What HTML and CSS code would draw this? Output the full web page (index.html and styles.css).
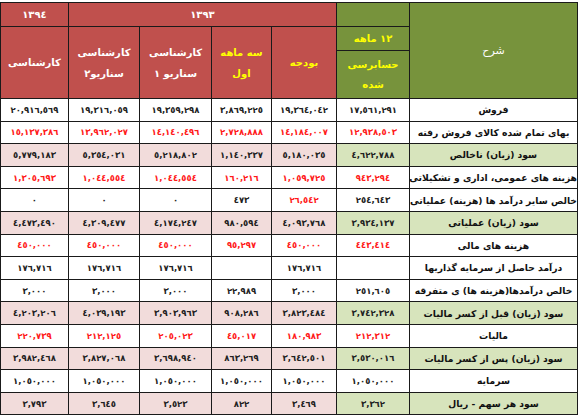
FILE: index.html
```html
<!DOCTYPE html>
<html lang="fa" dir="rtl">
<head>
<meta charset="utf-8">
<link rel="stylesheet" href="styles.css">
</head>
<body>
<table class="fin">
  <colgroup>
    <col class="c-label">
    <col class="c-12">
    <col class="c-bud">
    <col class="c-3m">
    <col class="c-s1">
    <col class="c-s2">
    <col class="c-94">
  </colgroup>
  <thead>
    <tr class="h1">
      <th class="hg label-h" rowspan="3">شرح</th>
      <th class="hg"></th>
      <th class="hr" colspan="4">١٣٩٣</th>
      <th class="hr">١٣٩٤</th>
    </tr>
    <tr class="h2">
      <th class="hg yel">١٢ ماهه</th>
      <th class="hr yel" rowspan="2">بودجه</th>
      <th class="hr yel" rowspan="2">سه ماهه<br>اول</th>
      <th class="hr" rowspan="2">کارشناسی<br>سناریو ١</th>
      <th class="hr" rowspan="2">کارشناسی<br>سناریو٢</th>
      <th class="hr" rowspan="2">کارشناسی</th>
    </tr>
    <tr class="h3">
      <th class="hg yel">حسابرسی<br>شده</th>
    </tr>
  </thead>
  <tbody>
    <tr>
      <td class="lbl">فروش</td>
      <td>١٧,٥٦١,٢٩١</td><td>١٩,٣٦٤,٠٤٢</td><td>٣,٨٦٩,٢٢٥</td><td>١٩,٣٥٩,٢٩٨</td><td>١٩,٣١٦,٠٥٩</td><td>٢٠,٩١٦,٥٦٩</td>
    </tr>
    <tr class="neg">
      <td class="lbl">بهای تمام شده کالای فروش رفته</td>
      <td>١٢,٩٣٨,٥٠٣</td><td>١٤,١٨٤,٠٠٧</td><td>٢,٧٢٨,٨٨٨</td><td>١٤,١٤٠,٤٩٦</td><td>١٣,٩٦٢,٠٢٧</td><td>١٥,١٣٧,٣٨٦</td>
    </tr>
    <tr class="sum">
      <td class="lbl">سود (زیان) ناخالص</td>
      <td>٤,٦٢٢,٧٨٨</td><td>٥,١٨٠,٠٣٥</td><td>١,١٤٠,٣٣٧</td><td>٥,٢١٨,٨٠٢</td><td>٥,٣٥٤,٠٣١</td><td>٥,٧٧٩,١٨٣</td>
    </tr>
    <tr class="neg">
      <td class="lbl">هزینه های عمومی، اداری و تشکیلاتی</td>
      <td>٩٤٣,٢٩٤</td><td>١,٠٥٩,٧٢٥</td><td>١٦٠,٢١٦</td><td>١,٠٤٤,٥٥٤</td><td>١,٠٤٤,٥٥٤</td><td>١,٣٠٥,٦٩٣</td>
    </tr>
    <tr>
      <td class="lbl">خالص سایر درآمد ها (هزینه) عملیاتی</td>
      <td>٢٥٤,٦٤٣</td><td class="red">٢٦,٥٤٢</td><td>٤٧٣</td><td>٠</td><td>٠</td><td>٠</td>
    </tr>
    <tr class="sum">
      <td class="lbl">سود (زیان) عملیاتی</td>
      <td>٣,٩٣٤,١٣٧</td><td>٤,٠٩٣,٧٦٨</td><td>٩٨٠,٥٩٤</td><td>٤,١٧٤,٢٤٧</td><td>٤,٣٠٩,٤٧٧</td><td>٤,٤٧٣,٤٩٠</td>
    </tr>
    <tr class="neg">
      <td class="lbl">هزینه های مالی</td>
      <td>٤٤٣,٤١٤</td><td>٤٥٠,٠٠٠</td><td>٩٥,٢٩٧</td><td>٤٥٠,٠٠٠</td><td>٤٥٠,٠٠٠</td><td>٤٥٠,٠٠٠</td>
    </tr>
    <tr>
      <td class="lbl">درآمد حاصل از سرمایه گذاریها</td>
      <td></td><td>١٧٦,٧١٦</td><td></td><td>١٧٦,٧١٦</td><td>١٧٦,٧١٦</td><td>١٧٦,٧١٦</td>
    </tr>
    <tr>
      <td class="lbl">خالص درآمدها(هزینه ها) ی متفرقه</td>
      <td>٢٥١,٦٠٥</td><td>٣,٠٠٠</td><td>٢٢,٩٨٩</td><td>٣,٠٠٠</td><td>٣,٠٠٠</td><td>٣,٠٠٠</td>
    </tr>
    <tr class="sum">
      <td class="lbl">سود (زیان) قبل از کسر مالیات</td>
      <td>٣,٧٤٢,٣٢٨</td><td>٣,٨٢٣,٤٨٤</td><td>٩٠٨,٢٨٦</td><td>٣,٩٠٣,٩٦٣</td><td>٤,٠٣٩,١٩٣</td><td>٤,٢٠٣,٢٠٦</td>
    </tr>
    <tr class="neg">
      <td class="lbl">مالیات</td>
      <td>٢١٢,٣١٢</td><td>١٨٠,٩٨٣</td><td>٤٥,٠١٧</td><td>٢٠٥,٠٢٣</td><td>٢١٢,١٢٥</td><td>٢٢٠,٧٣٩</td>
    </tr>
    <tr class="sum">
      <td class="lbl">سود (زیان) پس از کسر مالیات</td>
      <td>٣,٥٣٠,٠١٦</td><td>٣,٦٤٢,٥٠١</td><td>٨٦٣,٢٦٩</td><td>٣,٦٩٨,٩٤٠</td><td>٣,٨٢٧,٠٦٨</td><td>٣,٩٨٢,٤٦٨</td>
    </tr>
    <tr>
      <td class="lbl">سرمایه</td>
      <td>١,٠٥٠,٠٠٠</td><td>١,٠٥٠,٠٠٠</td><td>١,٠٥٠,٠٠٠</td><td>١,٠٥٠,٠٠٠</td><td>١,٠٥٠,٠٠٠</td><td>١,٠٥٠,٠٠٠</td>
    </tr>
    <tr class="sum">
      <td class="lbl">سود هر سهم - ریال</td>
      <td>٣,٣٦٢</td><td>٣,٤٦٩</td><td>٨٢٢</td><td>٣,٥٢٣</td><td>٣,٦٤٥</td><td>٣,٧٩٣</td>
    </tr>
  </tbody>
</table>
</body>
</html>
```

FILE: styles.css
```css
html, body {
  margin: 0;
  padding: 0;
  background: #ffffff;
}

body {
  padding: 2px 2px 0 1px;
  font-family: "DejaVu Sans", "Noto Sans", sans-serif;
}

.fin {
  border-collapse: collapse;
  table-layout: fixed;
  width: 577px;
  direction: rtl;
}

.c-label { width: 168px; }
.c-12 { width: 73px; }
.c-bud { width: 65px; }
.c-3m { width: 60px; }
.c-s1 { width: 72px; }
.c-s2 { width: 71px; }
.c-94 { width: 68px; }

.fin th,
.fin td {
  border: 1px solid #1a1a1a;
  padding: 0;
  text-align: center;
  vertical-align: middle;
  overflow: hidden;
  white-space: nowrap;
}

.fin th {
  color: #ffffff;
  font-size: 10px;
  font-weight: bold;
  line-height: 21px;
}

.hr { background: #c0504d; }
.hg { background: #77933c; }
.yel { color: #ffff00 !important; }

.label-h {
  font-size: 11px !important;
  font-weight: normal !important;
}

.h1 th { height: 23px; }
.h2 th.hg { height: 23px; line-height: 14px; }
.h3 th { height: 47px; line-height: 20px; }

.fin td {
  height: 21.6px;
  font-size: 8.5px;
  font-weight: bold;
  color: #222222;
  background: #ffffff;
}

.fin td.lbl {
  font-size: 9.2px;
  font-weight: bold;
  color: #111111;
}

.neg td { color: #ff1a1a; }
.neg td.lbl { color: #111111; }
.red { color: #ff1a1a !important; }

.sum td { background: #f2dcdb; }
.sum td.lbl,
.sum td:nth-child(2) { background: #d7e4bc; }
```
